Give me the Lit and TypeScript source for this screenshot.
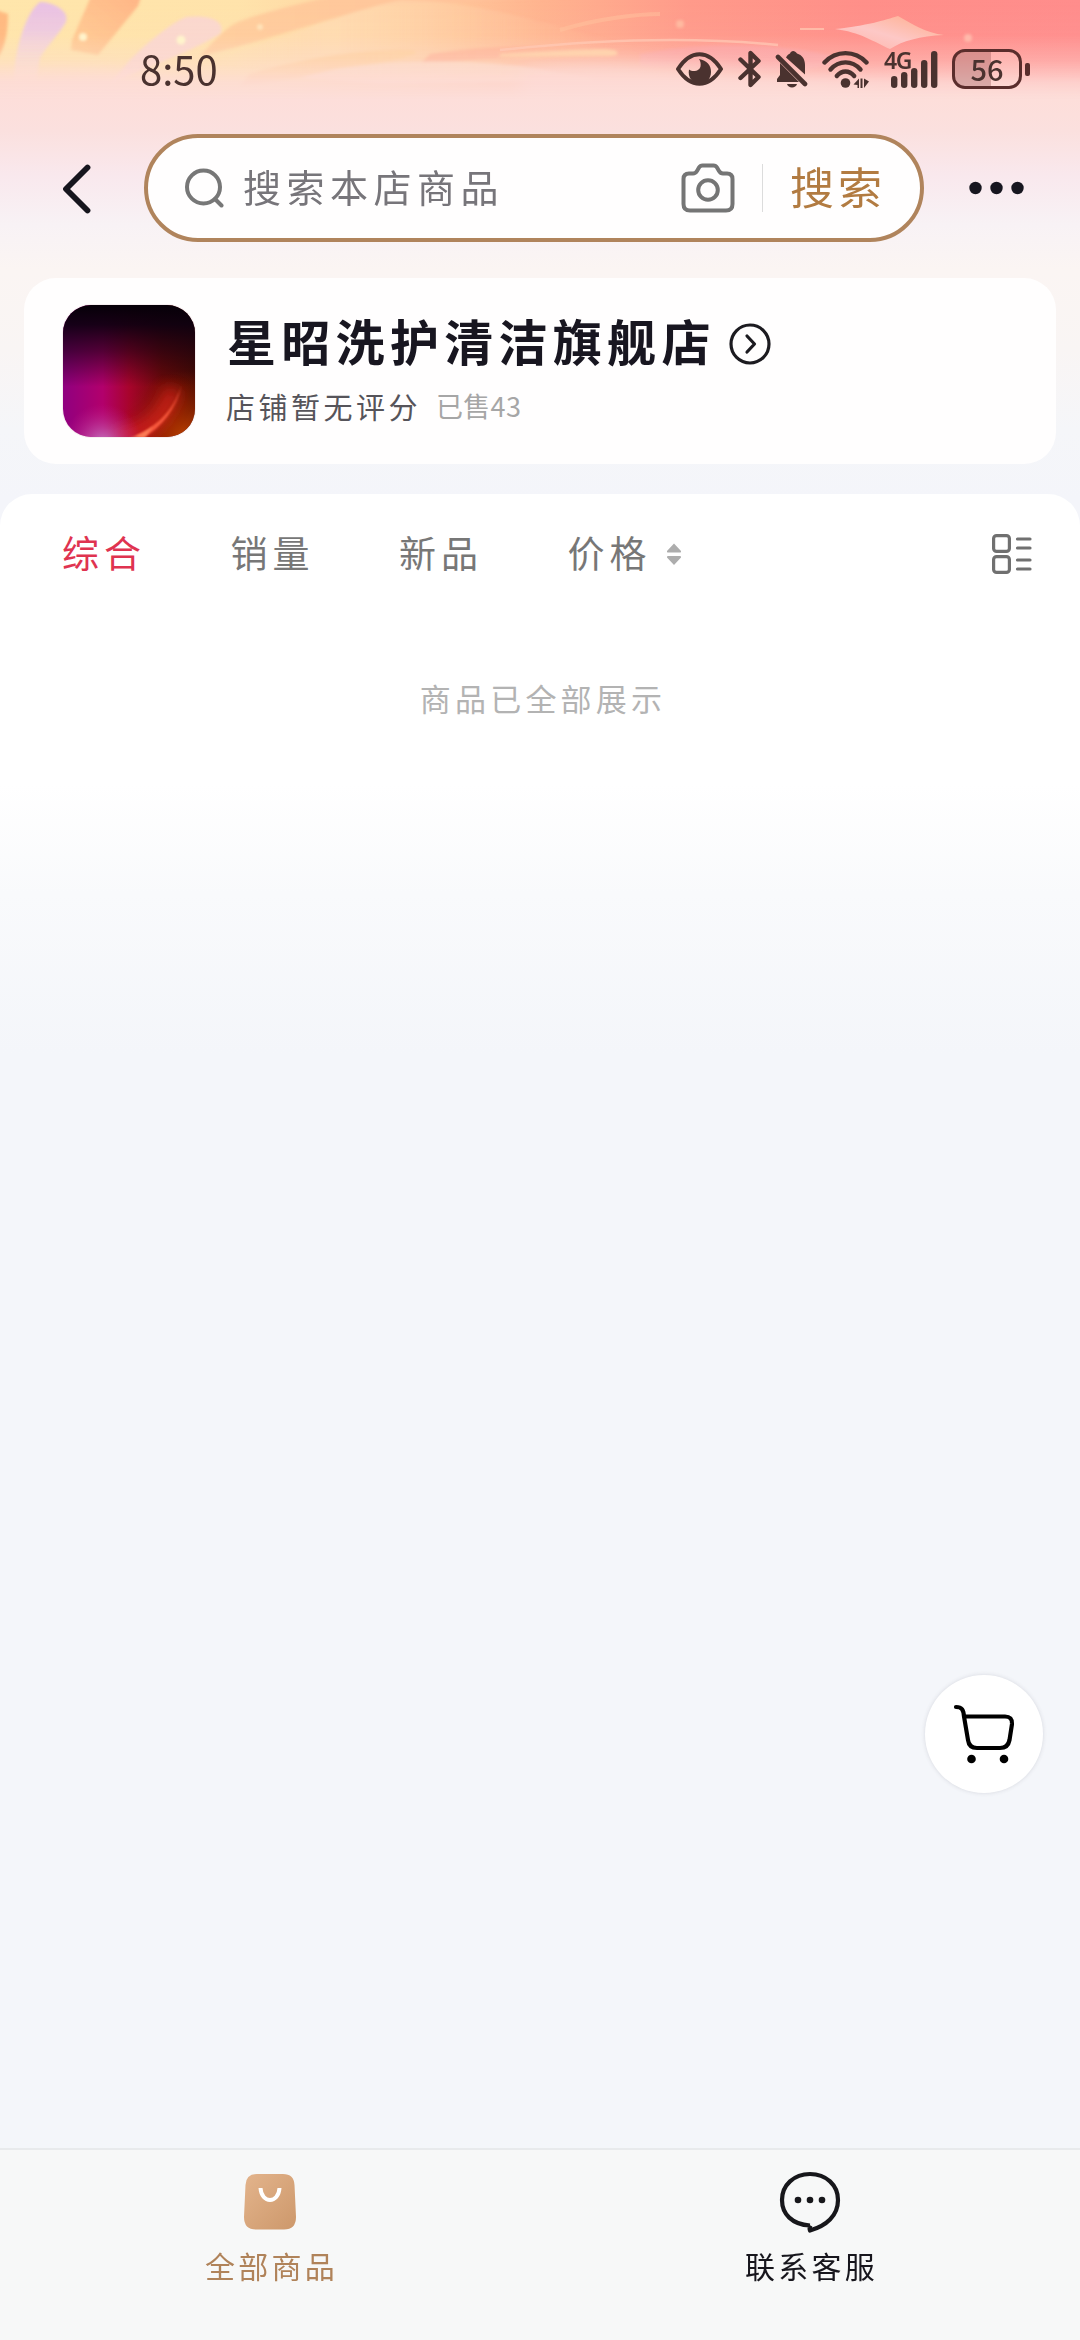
import { LitElement, html, css, svg } from "lit";
import { customElement, property } from "lit/decorators.js";

/** Painted ribbon artwork behind the status bar. */
@customElement("sky-art")
export class SkyArt extends LitElement {
  static styles = css`
    :host { display: block; }
    svg { display: block; width: 1080px; height: 500px; }
  `;

  render() {
    return html`
      <svg viewBox="0 0 1080 500" preserveAspectRatio="none">
        <defs>
          <linearGradient id="sky" x1="0" x2="1" y1="0" y2="0">
            <stop offset="0" stop-color="#ffe6ab" />
            <stop offset=".22" stop-color="#ffe3ab" />
            <stop offset=".36" stop-color="#ffd2a0" />
            <stop offset=".5" stop-color="#ffb48f" />
            <stop offset=".64" stop-color="#ff9a8a" />
            <stop offset=".8" stop-color="#ff8f89" />
            <stop offset="1" stop-color="#ff8d8c" />
          </linearGradient>
          <linearGradient id="fade" x1="0" x2="0" y1="0" y2="1">
            <stop offset="0" stop-color="#fcdcd6" stop-opacity="0" />
            <stop offset=".07" stop-color="#fcdcd6" stop-opacity=".04" />
            <stop offset=".12" stop-color="#fddcd6" stop-opacity=".36" />
            <stop offset=".165" stop-color="#fddcd8" stop-opacity=".84" />
            <stop offset=".2" stop-color="#fddeda" stop-opacity="1" />
            <stop offset=".26" stop-color="#fbe0de" />
            <stop offset=".35" stop-color="#f9e8ed" />
            <stop offset=".45" stop-color="#f8f2f5" />
            <stop offset=".54" stop-color="#fbf5f3" />
            <stop offset=".7" stop-color="#f9f5f4" />
            <stop offset=".86" stop-color="#f5f6f9" />
            <stop offset="1" stop-color="#f4f5fa" />
          </linearGradient>
          <linearGradient id="lilac" x1="0" x2="0" y1="0" y2="1">
            <stop offset="0" stop-color="#e8c0e4" />
            <stop offset=".35" stop-color="#efcbdf" />
            <stop offset="1" stop-color="#fbe3dc" stop-opacity=".5" />
          </linearGradient>
          <linearGradient id="amber" x1="1" x2="0" y1="0" y2="1">
            <stop offset="0" stop-color="#ffb486" />
            <stop offset="1" stop-color="#ffc38a" stop-opacity=".7" />
          </linearGradient>
          <linearGradient id="ribbon" x1="0" x2="1" y1="0" y2="0">
            <stop offset="0" stop-color="#ffcf9c" />
            <stop offset=".55" stop-color="#ffc39a" />
            <stop offset="1" stop-color="#ffb996" stop-opacity="0" />
          </linearGradient>
          <linearGradient id="cream" x1="0" x2="1" y1="0" y2="0">
            <stop offset="0" stop-color="#ffe0b8" stop-opacity="0" />
            <stop offset=".3" stop-color="#ffdcb2" />
            <stop offset="1" stop-color="#ffc39a" stop-opacity="0" />
          </linearGradient>
          <linearGradient id="star" x1="0" x2="1" y1="1" y2="0">
            <stop offset="0" stop-color="#ffb3a6" />
            <stop offset=".45" stop-color="#fdc8c6" />
            <stop offset="1" stop-color="#ffac88" />
          </linearGradient>
          <filter id="soft" x="-20%" y="-20%" width="140%" height="140%"><feGaussianBlur stdDeviation="1.600" /></filter>
          <filter id="haze" x="-30%" y="-60%" width="160%" height="220%"><feGaussianBlur stdDeviation="9" /></filter>
        </defs>
        <rect width="1080" height="500" fill="url(#sky)" />
        <g filter="url(#soft)">
          <path d="M200 56 C215 40 225 28 238 22 C270 10 300 4 340 -6 L640 -6 C520 0 430 2 380 6 C320 20 270 40 200 56 Z" fill="url(#ribbon)" />
          <path d="M210 62 C290 34 360 8 400 0 C480 0 540 24 620 42 L420 80 Z" fill="url(#cream)" opacity=".85" />
          <path d="M142 -6 L138 6 L98 55 L71 50 L72 40 L92 -6 Z" fill="url(#amber)" />
          <path d="M40 2 C52 2 70 10 66 22 C58 36 48 44 40 58 L36 80 L14 82 C14 50 26 12 40 2 Z" fill="url(#lilac)" />
          <path d="M-4 10 L8 14 C8 36 4 50 -4 60 Z" fill="#ffba80" />
          <path d="M186 17 C215 14 226 24 220 34 C190 52 160 62 110 84 L130 60 C150 40 170 24 186 17 Z" fill="#fbd6d2" opacity=".9" />
          <path d="M250 74 C310 56 360 50 410 50 C430 52 400 62 340 68 C310 76 270 84 240 86 Z" fill="#ffcf97" opacity=".8" />
          <path d="M430 54 C470 48 520 44 580 46 L590 54 C530 56 470 60 420 64 Z" fill="#ffb090" opacity=".8" />
          <path d="M300 78 C360 60 440 58 520 66 L600 80 L380 84 Z" fill="#fddcc4" opacity=".8" />
          <path d="M640 54 C720 38 800 46 850 60 C800 76 740 72 640 66 Z" fill="#fba0ab" opacity=".5" />
        </g>
        <g filter="url(#haze)">
          <path d="M520 68 C640 54 700 74 850 84 L1100 98 L1100 120 L520 120 Z" fill="#fdd3c6" opacity=".9" />
          <ellipse cx="60" cy="88" rx="130" ry="14" fill="#feddc8" />
        </g>
        <rect width="1080" height="500" fill="url(#fade)" />
        <g filter="url(#soft)">
          <path d="M500 54 C590 49 610 48 616 51 C620 54 616 56 608 56 L500 57 Z" fill="#ffd3ae" />
        </g>
        <path d="M500 50 C620 37 710 38 778 45" fill="none" stroke="#ffcbb6" stroke-width="2.500" opacity=".7" />
        <path d="M560 30 C600 18 640 14 660 14" fill="none" stroke="#ffc5a0" stroke-width="4" opacity=".45" />
        <path d="M800 29 H824" stroke="#ffbba8" stroke-width="2" />
        <path d="M835 29 C866 26 885 20 898 16 C912 24 926 33 944 35 C920 36 902 41 890 49 C874 42 860 32 835 29 Z" fill="url(#star)" />
        <g fill="#fff4cc" filter="url(#soft)">
          <circle cx="83" cy="37" r="4" />
          <circle cx="181" cy="40" r="4.500" />
          <circle cx="260" cy="27" r="3" opacity=".6" />
          <circle cx="968" cy="38" r="4" fill="#ffb9ab" />
          <circle cx="680" cy="24" r="4" fill="#ffb9a0" />
        </g>
      </svg>
    `;
  }
}

/** System status bar: clock on the left, indicators on the right. */
@customElement("status-bar")
export class StatusBar extends LitElement {
  @property() time = "8:50";
  @property({ type: Number }) level = 56;

  static styles = css`
    :host {
      display: flex;
      justify-content: space-between;
      align-items: flex-start;
      height: 134px;
      box-sizing: border-box;
      padding: 49px 50px 0 140px;
      color: #4a322f;
    }
    .time { font-size: 40px; line-height: 44px; margin-top: -3px; }
    .icons { display: flex; align-items: center; height: 40px; }
    .icons svg { display: block; flex: none; }
    .eye { margin-right: 15px; }
    .bt { margin-right: 14px; }
    .bell { margin-right: 14px; }
    .wifi { margin-right: 14px; }
    .cell { position: relative; margin-right: 13px; width: 55px; height: 36px; }
    .net { position: absolute; left: 0; top: -1px; font: 600 23px/20px "Noto Sans", "Liberation Sans", sans-serif; letter-spacing: -1.500px; }
    .battery {
      position: relative;
      width: 70px;
      height: 40px;
      box-sizing: border-box;
      border: 3.500px solid #5a2d2c;
      border-radius: 13px;
      display: flex;
      align-items: center;
      justify-content: center;
      font-size: 29px;
      line-height: 32px;
      background: rgba(255, 225, 220, .25);
    }
    .fill { position: absolute; left: 0; top: 0; bottom: 0; border-radius: 9px 0 0 9px; background: rgba(140, 70, 75, .32); }
    .value { position: relative; top: -1px; font-weight: 500; }
    .nub { width: 5px; height: 13px; border-radius: 2px; margin-left: 3px; background: #5a2d2c; }
  `;

  render() {
    return html`
      <div class="time">${this.time}</div>
      <div class="icons">
        <svg class="eye" width="47" height="34" viewBox="0 0 47 34">
          <path d="M2 17 C9 6 16 2.200 23.500 2.200 S38 6 45 17 C38 28 31 31.800 23.500 31.800 S9 28 2 17 Z" fill="none" stroke="currentColor" stroke-width="4" stroke-linejoin="round" />
          <path d="M23 7 C31 8.500 35 13 35 20 C35 27 30 31.500 23.500 31.500 C16 31.500 11.500 25 13 17.500 C17 20.500 23.500 19 24.500 14.500 C25 11.500 24.500 9.500 23 7 Z" fill="currentColor" />
        </svg>
        <svg class="bt" width="23" height="38" viewBox="0 0 23 38">
          <path d="M2.500 9.500 L20.500 27 L12.500 35 V22 M2.500 28 L20.500 11 L12.500 3 V15" fill="none" stroke="currentColor" stroke-width="4.400" stroke-linecap="round" stroke-linejoin="round" />
        </svg>
        <svg class="bell" width="33" height="38" viewBox="0 0 33 38">
          <path d="M11 7.500 C12 5 14 4 15 3.500 C16 0 20 0 22 3.500 C27 5 30 9 30 15 V24.500 Z" fill="currentColor" />
          <path d="M5 13 L24 32 H2 V29 L5 25 Z" fill="currentColor" />
          <path d="M3 7 L30 34" stroke="currentColor" stroke-width="4.600" stroke-linecap="round" />
          <path d="M12 34 H22 C21 38.500 13 38.500 12 34 Z" fill="currentColor" />
        </svg>
        <svg class="wifi" width="48" height="38" viewBox="0 0 48 38">
          <g fill="none" stroke="currentColor" stroke-width="4.400" stroke-linecap="round">
            <path d="M2.500 12.500 C14 0 33 0 44.500 12.500" />
            <path d="M8.500 19.500 C17 10 30 10 38.500 19.500" />
            <path d="M14.800 26 C20 20 27 20 32.200 26" />
          </g>
          <circle cx="23.500" cy="33" r="4.800" fill="currentColor" />
          <path d="M37 28.500 V38 H35.500 V35 L31.500 34.500 Z M38.500 28.500 H40.500 V38 H38.500 Z M42 28.500 L47 31.500 L42 38 Z" fill="currentColor" />
        </svg>
        <div class="cell">
          <span class="net">4G</span>
          <svg width="55" height="37" viewBox="0 0 55 37">
            ${[[7, 25], [17, 21], [27, 17], [37, 9], [47, 0]].map(
              ([x, y]) => svg`<rect x=${x} y=${y} width="6.400" height=${37 - y} rx="3.200" fill="currentColor" />`
            )}
          </svg>
        </div>
        <div class="battery">
          <div class="fill" style="width:${this.level}%"></div>
          <span class="value">${this.level}</span>
        </div>
        <div class="nub"></div>
      </div>
    `;
  }
}

/** Back button, search capsule and overflow menu. */
@customElement("search-header")
export class SearchHeader extends LitElement {
  static styles = css`
    :host { display: flex; align-items: center; height: 108px; padding: 0 53px 0 60px; }
    svg { display: block; flex: none; }
    .back { margin-right: 51px; position: relative; top: 1px; }
    .box {
      display: flex;
      flex: none;
      align-items: center;
      box-sizing: border-box;
      width: 780px;
      height: 108px;
      border: 4px solid #b0845c;
      border-radius: 54px;
      background: #fffefe;
      padding: 0 39px 0 37px;
      margin-right: 45px;
    }
    .hint { flex: 1; margin: -4px 0 0 18px; font-size: 38px; line-height: 50px; letter-spacing: 5.500px; color: #77757a; }
    .rule { width: 1.500px; height: 48px; background: #dcdcdc; margin: 0 27px 0 27px; }
    .go { font-size: 44px; line-height: 54px; letter-spacing: 4px; margin-top: -4px; color: #b27b41; white-space: nowrap; margin-right: -5px; }
  `;

  render() {
    return html`
      <svg class="back" width="33" height="52" viewBox="0 0 33 52">
        <path d="M27.500 4.500 L6 26 L27.500 47.500" fill="none" stroke="#16151d" stroke-width="5.800" stroke-linecap="round" stroke-linejoin="round" />
      </svg>
      <div class="box">
        <svg width="40" height="40" viewBox="0 0 40 40">
          <g fill="none" stroke="#777" stroke-width="4" stroke-linecap="round">
            <circle cx="18.500" cy="19" r="16.500" />
            <path d="M30 31 L36.500 37.500" />
          </g>
        </svg>
        <div class="hint">搜索本店商品</div>
        <svg width="54" height="50" viewBox="0 0 54 50">
          <g fill="none" stroke="#757575" stroke-width="4" stroke-linejoin="round">
            <path d="M2.500 16 Q2.500 10.500 8 10.500 H12 Q14.500 10.500 16 8 L18 4.500 Q19.200 2.500 21.500 2.500 H32.500 Q34.800 2.500 36 4.500 L38 8 Q39.500 10.500 42 10.500 H46 Q51.500 10.500 51.500 16 V41 Q51.500 47.500 45 47.500 H9 Q2.500 47.500 2.500 41 Z" />
            <circle cx="27" cy="27" r="9.800" />
          </g>
        </svg>
        <div class="rule"></div>
        <div class="go">搜索</div>
      </div>
      <svg width="56" height="14" viewBox="0 0 56 14">
        <g fill="#17161f"><circle cx="6.500" cy="7" r="6.200" /><circle cx="27.500" cy="7" r="6.200" /><circle cx="48.500" cy="7" r="6.200" /></g>
      </svg>
    `;
  }
}

/** Shop summary card. */
@customElement("shop-card")
export class ShopCard extends LitElement {
  static styles = css`
    :host {
      display: flex;
      box-sizing: border-box;
      height: 186px;
      margin: 36px 24px 0;
      padding: 27px 39px;
      border-radius: 32px;
      background: #fffefe;
    }
    svg { display: block; flex: none; }
    .logo {
      width: 132px;
      height: 132px;
      flex: none;
      border-radius: 28px;
      overflow: hidden;
      box-shadow: 0 0 0 1px #f6eef0;
    }
    .info { margin-left: 31px; display: flex; flex-direction: column; }
    .row { display: flex; align-items: center; }
    .name { font-size: 49px; line-height: 60px; letter-spacing: 5.300px; font-weight: 700; color: #181620; margin: -6px 0 0 1px; }
    .arrow { margin: 2px 0 0 13px; }
    .title { margin-top: 8px; height: 60px; }
    .meta { margin-top: 13px; font-size: 29px; line-height: 40px; height: 40px; }
    .score { color: #56545a; letter-spacing: 3.500px; }
    .sold { color: #a6a6a6; margin-left: 15px; letter-spacing: .300px; font-size: 27px; }
  `;

  render() {
    return html`
      <div class="logo">
        <svg width="132" height="132" viewBox="0 0 132 132">
          <defs>
            <linearGradient id="base" x1="0" x2="1" y1="0" y2="0">
              <stop offset="0" stop-color="#900080" /><stop offset=".3" stop-color="#b2006c" />
              <stop offset=".5" stop-color="#a8042c" /><stop offset=".75" stop-color="#6e0a08" /><stop offset="1" stop-color="#4a0c02" />
            </linearGradient>
            <linearGradient id="dark" x1="0" x2="0" y1="0" y2="1">
              <stop offset="0" stop-color="#060008" /><stop offset=".15" stop-color="#0c0010" stop-opacity=".93" />
              <stop offset=".35" stop-color="#140012" stop-opacity=".6" /><stop offset=".62" stop-color="#140012" stop-opacity="0" />
            </linearGradient>
            <radialGradient id="ember" cx=".92" cy="1" r=".5">
              <stop offset="0" stop-color="#b84000" /><stop offset="1" stop-color="#a02000" stop-opacity="0" />
            </radialGradient>
            <radialGradient id="glow" cx=".3" cy="1.050" r=".3">
              <stop offset="0" stop-color="#c47cc4" /><stop offset="1" stop-color="#c02090" stop-opacity="0" />
            </radialGradient>
            <filter id="b1" x="-20%" y="-20%" width="140%" height="140%"><feGaussianBlur stdDeviation="1" /></filter>
            <filter id="b2" x="-30%" y="-30%" width="160%" height="160%"><feGaussianBlur stdDeviation="7" /></filter>
          </defs>
          <rect width="132" height="132" fill="url(#base)" />
          <rect width="132" height="132" fill="url(#dark)" />
          <rect width="132" height="132" fill="url(#ember)" />
          <path d="M50 132 C84 130 102 112 110 84" fill="none" stroke="#e02020" stroke-width="16" opacity=".7" filter="url(#b2)" />
          <rect width="132" height="132" fill="url(#glow)" />
          <path d="M80 133 C99 122 113 104 118.500 80 C112 102 98 119 72 131 Z" fill="#f8583c" filter="url(#b1)" />
          <path d="M66 133 C76 130 84 126 90 121 L82 133 Z" fill="#ff9468" opacity=".6" filter="url(#b1)" />
        </svg>
      </div>
      <div class="info">
        <div class="row title">
          <span class="name">星昭洗护清洁旗舰店</span>
          <svg class="arrow" width="42" height="42" viewBox="0 0 42 42">
            <g fill="none" stroke="#1c1b20" stroke-width="3.200" stroke-linecap="round" stroke-linejoin="round">
              <circle cx="21" cy="21" r="19" />
              <path d="M18 13 L25.500 21 L18 29" />
            </g>
          </svg>
        </div>
        <div class="row meta">
          <span class="score">店铺暂无评分</span>
          <span class="sold">已售43</span>
        </div>
      </div>
    `;
  }
}

/** Sort tabs and the end-of-list notice. */
@customElement("goods-panel")
export class GoodsPanel extends LitElement {
  @property() active = "综合";
  private tabs = ["综合", "销量", "新品", "价格"];

  static styles = css`
    :host {
      display: block;
      flex: 1;
      margin-top: 30px;
      border-radius: 32px 32px 0 0;
      background: linear-gradient(#fff 0, #fff 290px, #f9fafc 400px, #f4f6fa 560px, #f4f6fa 100%);
    }
    .tabs { display: flex; align-items: center; height: 120px; padding: 0 48px 0 62px; }
    .tab { width: 168.500px; font-size: 37px; line-height: 50px; letter-spacing: 5px; color: #777; white-space: nowrap; display: flex; align-items: center; }
    .tab span { margin-top: -4px; }
    .tab.active { color: #df3350; }
    .sort { margin-left: 14px; }
    .view { margin-left: auto; }
    svg { display: block; flex: none; }
    .end { margin-top: 59px; padding-left: 6px; text-align: center; font-size: 31px; line-height: 50px; letter-spacing: 4.200px; color: #b3b3b3; }
  `;

  render() {
    return html`
      <div class="tabs">
        ${this.tabs.map(
          (t) => html`<div class="tab ${t === this.active ? "active" : ""}">
            <span>${t}</span>
            ${t === "价格"
              ? html`<svg class="sort" width="16" height="24" viewBox="0 0 16 24">
                  <path d="M8 1.500 L15 9 Q15.500 10.500 14 10.500 H2 Q.5 10.500 1 9 Z M8 23 L15 15.500 Q15.500 14 14 14 H2 Q.5 14 1 15.500 Z" fill="#adadad" />
                </svg>`
              : ""}
          </div>`
        )}
        <svg class="view" width="40" height="40" viewBox="0 0 40 40">
          <g fill="none" stroke="#707070" stroke-width="3.200" stroke-linecap="round">
            <rect x="1.600" y="1.600" width="15.800" height="15.800" rx="3" />
            <rect x="1.600" y="22.600" width="15.800" height="15.800" rx="3" />
            <path d="M25.500 5 H38 M25.500 14 H38 M25.500 26 H38 M25.500 35 H38" />
          </g>
        </svg>
      </div>
      <div class="end">商品已全部展示</div>
    `;
  }
}

/** Bottom navigation. */
@customElement("bottom-nav")
export class BottomNav extends LitElement {
  static styles = css`
    :host {
      display: grid;
      grid-template-columns: 1fr 1fr;
      box-sizing: border-box;
      height: 192px;
      border-top: 2px solid #e8eaec;
      background: #f7f8f8;
    }
    .item { display: flex; flex-direction: column; align-items: center; padding-top: 20px; font-size: 30px; line-height: 44px; letter-spacing: 3.300px; color: #17161d; }
    .item.on { color: #b0835a; }
    .item span { margin: 7px -3px 0 0; }
    svg { display: block; }
  `;

  render() {
    return html`
      <div class="item on">
        <svg width="64" height="66" viewBox="0 0 64 66">
          <defs><linearGradient id="bag" x1="0" x2="1" y1="0" y2="1"><stop offset="0" stop-color="#e3b48c" /><stop offset="1" stop-color="#cd986b" /></linearGradient></defs>
          <path d="M19 4 H45 Q56 4 56.500 15 L58 47 Q58 59.500 46 59.500 H18 Q6 59.500 6 47 L7.500 15 Q8 4 19 4 Z" fill="url(#bag)" />
          <path d="M22.500 18 C23.500 34 40.500 34 41.500 18" fill="none" stroke="#fff" stroke-width="4" />
        </svg>
        <span>全部商品</span>
      </div>
      <div class="item">
        <svg width="64" height="66" viewBox="0 0 64 66">
          <path d="M32 55.500 C14 54.500 4 44 4 30 C4 15 16 4 32 4 C48 4 60 15 60 30 C60 46 48 56 32 60.500 Q31 58.500 32.500 55.500" fill="none" stroke="#17171b" stroke-width="4.200" stroke-linejoin="round" />
          <g fill="#17171b"><circle cx="20" cy="30" r="3.300" /><circle cx="32" cy="30" r="3.300" /><circle cx="44" cy="30" r="3.300" /></g>
        </svg>
        <span>联系客服</span>
      </div>
    `;
  }
}

@customElement("app-root")
export class AppRoot extends LitElement {
  static styles = css`
    :host {
      display: flex;
      flex-direction: column;
      position: relative;
      width: 1080px;
      height: 2340px;
      overflow: hidden;
      background: #f4f5fa;
      font-family: "Noto Sans CJK SC", sans-serif;
    }
    sky-art { position: absolute; left: 0; top: 0; }
    status-bar, search-header, shop-card, goods-panel, bottom-nav { position: relative; }
    .cart {
      position: absolute;
      right: 37px;
      bottom: 547px;
      width: 118px;
      height: 118px;
      border-radius: 50%;
      background: #fff;
      box-shadow: 0 0 4px rgba(60, 60, 80, .16);
    }
    .cart svg { display: block; }
  `;

  render() {
    return html`
      <sky-art></sky-art>
      <status-bar></status-bar>
      <search-header></search-header>
      <shop-card></shop-card>
      <goods-panel></goods-panel>
      <bottom-nav></bottom-nav>
      <div class="cart">
        <svg width="118" height="118" viewBox="0 0 118 118">
          <path d="M31 32 C37 32 38.500 35 39 41.500 H80 Q87.500 41.500 87 49 L84.500 65 Q83 73 75 73 H52 Q44 73 43 65 L39 41.500" fill="none" stroke="#000" stroke-width="4.200" stroke-linecap="round" stroke-linejoin="round" />
          <circle cx="46.500" cy="84" r="4.300" /><circle cx="79" cy="84" r="4.300" />
        </svg>
      </div>
    `;
  }
}
